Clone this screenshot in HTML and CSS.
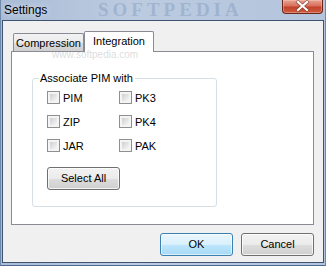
FILE: index.html
```html
<!DOCTYPE html>
<html>
<head>
<meta charset="utf-8">
<link rel="stylesheet" href="styles.css">
</head>
<body>
<div class="window">
  <div class="titlebar">
    <span class="title">Settings</span>
    <span class="wm-title">SOFTPEDIA</span>
    <div class="close">
      <svg width="41" height="14" viewBox="0 0 41 14">
        <path d="M16 3 L25 11 M25 3 L16 11" stroke="#5a2418" stroke-width="3.6" stroke-linecap="square" fill="none" opacity="0.55"/>
        <path d="M16 3 L25 11 M25 3 L16 11" stroke="#ffffff" stroke-width="2.2" stroke-linecap="square" fill="none"/>
      </svg>
    </div>
  </div>
  <div class="client">
    <span class="wm-url">www.softpedia.com</span>
    <div class="tabctl">
      <div class="tabstrip">
        <div class="tab">Compression</div>
        <div class="tab active">Integration</div>
      </div>
      <div class="panel">
        <div class="group">
          <span class="legend">Associate PIM with</span>
          <div class="checks">
            <label class="chk"><span class="box"></span>PIM</label>
            <label class="chk"><span class="box"></span>PK3</label>
            <label class="chk"><span class="box"></span>ZIP</label>
            <label class="chk"><span class="box"></span>PK4</label>
            <label class="chk"><span class="box"></span>JAR</label>
            <label class="chk"><span class="box"></span>PAK</label>
          </div>
          <div class="btn select-all">Select All</div>
        </div>
      </div>
    </div>
    <div class="buttons">
      <div class="btn default">OK</div>
      <div class="btn">Cancel</div>
    </div>
  </div>
</div>
</body>
</html>
```
FILE: styles.css
```css
* { box-sizing: border-box; }
html, body { margin: 0; padding: 0; }
body {
  width: 326px;
  height: 266px;
  overflow: hidden;
  font-family: "Liberation Sans", Arial, sans-serif;
  font-size: 11px;
  color: #000;
}
.window {
  width: 326px;
  height: 266px;
  background: linear-gradient(to right, #a9bcd6 0%, #bccbe0 40%, #b3c4dc 100%);
  border-left: 1px solid #6f89ad;
  border-right: 1px solid #6f89ad;
  border-bottom: 1px solid #4d6a93;
  padding: 0 1px 2px 1px;
  display: flex;
  flex-direction: column;
}
.titlebar {
  height: 20px;
  position: relative;
  display: flex;
  align-items: flex-start;
  padding-left: 2px;
}
.title {
  font-size: 12px;
  line-height: 14px;
  margin-top: 3px;
  color: #000;
  text-shadow: 0 0 6px rgba(255,255,255,0.8);
}
.wm-title {
  position: absolute;
  left: 96px;
  top: 0;
  font-family: "Liberation Serif", serif;
  font-weight: bold;
  font-size: 19px;
  line-height: 20px;
  letter-spacing: 4px;
  color: rgba(120,145,180,0.4);
}
.close {
  position: absolute;
  right: 1px;
  top: 0;
  width: 41px;
  height: 14px;
  border: 1px solid #6a261b;
  border-top: none;
  border-radius: 0 0 4px 4px;
  background: linear-gradient(to bottom, #e8a393 0%, #d7705b 45%, #c2412b 55%, #cf5c3f 100%);
  box-shadow: inset 0 0 0 1px rgba(255,220,210,0.35);
}
.close svg { display: block; margin: -1px 0 0 -1px; }
.client {
  flex: 1;
  position: relative;
  background: #f0f0f0;
  border: 1px solid #3f5473;
  padding: 10px 9px 6px 8px;
  display: flex;
  flex-direction: column;
}
.wm-url {
  position: absolute;
  left: 49px;
  top: 28px;
  font-size: 10px;
  color: rgba(150,150,150,0.35);
  pointer-events: none;
  z-index: 3;
}
.tabctl { display: flex; flex-direction: column; }
.tabstrip {
  height: 20px;
  display: flex;
  align-items: flex-end;
  padding-left: 2px;
}
.tab {
  height: 18px;
  width: 71px;
  border: 1px solid #898c95;
  border-bottom: none;
  border-radius: 2px 2px 0 0;
  background: linear-gradient(to bottom, #f2f2f2 0%, #ebebeb 50%, #dddddd 51%, #cfcfcf 100%);
  text-align: center;
  line-height: 17px;
  padding-top: 1px;
}
.tab.active {
  position: relative;
  z-index: 2;
  width: 70px;
  height: 21px;
  margin-bottom: -1px;
  background: #fff;
  line-height: 16px;
  padding-top: 1px;
}
.panel {
  height: 174px;
  background: #fff;
  border: 1px solid #898c95;
  padding: 26px 0 0 20px;
}
.group {
  width: 185px;
  height: 129px;
  border: 1px solid #d5dfe5;
  border-radius: 3px;
  padding: 0 0 0 14px;
  display: flex;
  flex-direction: column;
  align-items: flex-start;
}
.legend {
  margin: -7px 0 0 -8px;
  padding: 0 2px 0 1px;
  background: #fff;
  line-height: 13px;
  font-size: 11px;
}
.checks {
  margin-top: 6px;
  display: grid;
  grid-template-columns: 72px 72px;
  row-gap: 11px;
}
.chk {
  display: flex;
  align-items: center;
  height: 13px;
  gap: 3px;
}
.box {
  width: 13px;
  height: 13px;
  border: 1px solid #8e8f8f;
  padding: 2px;
  background: linear-gradient(135deg, #cdd0d4, #f7f7f7) content-box, #f4f4f4;
}
.btn {
  width: 73px;
  height: 23px;
  border: 1px solid #707070;
  border-radius: 3px;
  background: linear-gradient(to bottom, #f2f2f2 0%, #ebebeb 50%, #dddddd 51%, #cfcfcf 100%);
  box-shadow: inset 0 0 0 1px rgba(255,255,255,0.75);
  display: flex;
  align-items: center;
  justify-content: center;
  line-height: 13px;
}
.select-all {
  margin-top: 15px;
}
.buttons {
  margin-top: 8px;
  display: flex;
  justify-content: flex-end;
  gap: 8px;
}
.btn.default {
  border-color: #3c7fb1;
  background: linear-gradient(to bottom, #eaf6fd 0%, #d9f0fc 50%, #bee6fd 51%, #a7d9f5 100%);
  box-shadow: inset 0 0 0 1px rgba(255,255,255,0.6);
}
```
